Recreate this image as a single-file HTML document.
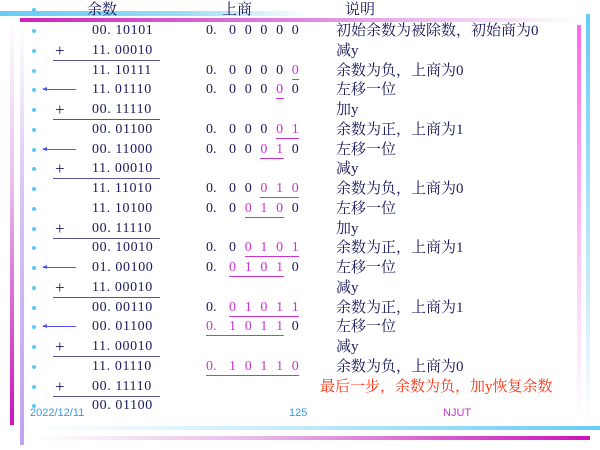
<!DOCTYPE html>
<html><head><meta charset="utf-8"><style>
body{margin:0;width:600px;height:450px;position:relative;overflow:hidden;background:#fff;font-family:"Liberation Serif","Noto Serif CJK SC",serif;font-size:14px;color:#1a1a5a}
.a{position:absolute}
.r{position:absolute;left:0;width:600px;height:20px;line-height:20px}
.b{position:absolute;left:32px;top:8px;width:4px;height:4px;border-radius:50%;background:#5bc8f5}
.n{position:absolute;left:92px;letter-spacing:0.6px}
.p{position:absolute;left:55px;font-size:17px}
.u{position:absolute;left:53px;width:107px;top:19px;height:1px;background:#555590}
.ar{position:absolute;left:43px;top:9px;width:33px;height:1px;background:#5555ee}
.ar:before{content:"";position:absolute;left:-1px;top:-2px;border-right:5px solid #5555ee;border-top:2.5px solid transparent;border-bottom:2.5px solid transparent}
.q{position:absolute;left:206px;white-space:nowrap}
.q span{display:inline-block;width:15.7px}
.q span.z{width:23px}
.q span.m{color:#cc33cc;border-bottom:1px solid #cc33cc;line-height:17px}
.q span.e{color:#cc33cc;border-bottom:1px solid #cc33cc;line-height:17px;width:7.5px;margin-right:8.2px}
.t{position:absolute;left:336px;font-size:15px;font-family:"Liberation Serif","Noto Serif CJK SC",serif}
</style></head><body>
<div class="a" style="left:0;top:11px;width:310px;height:5px;background:linear-gradient(90deg,#66ccf5,#9bdcf8 60%,#fff)"></div>
<div class="a" style="left:20px;top:18px;width:560px;height:4px;background:linear-gradient(90deg,#cc22bb,#dd88dd 50%,#fff)"></div>
<div class="a" style="left:10px;top:20px;width:4px;height:405px;background:linear-gradient(180deg,#fff,#e8c0ec 40%,#cc11bb)"></div>
<div class="a" style="left:20px;top:25px;width:4px;height:420px;background:linear-gradient(180deg,#fff,#d8c4f4 40%,#c4a0f4)"></div>
<div class="a" style="left:577px;top:25px;width:4px;height:395px;background:linear-gradient(180deg,#ff66ee,#ffd8f8 70%,#fff)"></div>
<div class="a" style="left:586px;top:14px;width:4px;height:410px;background:linear-gradient(180deg,#66ccf5,#cdeefb 70%,#fff)"></div>
<div class="a" style="left:30px;top:426px;width:570px;height:4px;background:linear-gradient(90deg,#fff,#cdeefb 40%,#66ccf5)"></div>
<div class="a" style="left:35px;top:436px;width:555px;height:4px;background:linear-gradient(90deg,#fff,#e8b8e8 40%,#cc11bb)"></div>

<div class="r" style="top:0;font-size:15px"><div class="b"></div><span class="a" style="left:87px">余数</span><span class="a" style="left:222px">上商</span><span class="a" style="left:345px">说明</span></div>

<div class="r" style="top:21px"><div class="b"></div><span class="n">00. 10101</span><div class="q"><span class="z">0.</span><span>0</span><span>0</span><span>0</span><span>0</span><span>0</span></div><span class="t">初始余数为被除数，初始商为0</span></div>
<div class="r" style="top:41px"><div class="b"></div><span class="p">+</span><span class="n">11. 00010</span><div class="u"></div><span class="t">减y</span></div>
<div class="r" style="top:61px"><div class="b"></div><span class="n">11. 10111</span><div class="q"><span class="z">0.</span><span>0</span><span>0</span><span>0</span><span>0</span><span class="e">0</span></div><span class="t">余数为负，上商为0</span></div>
<div class="r" style="top:80px"><div class="b"></div><div class="ar"></div><span class="n">11. 01110</span><div class="q"><span class="z">0.</span><span>0</span><span>0</span><span>0</span><span class="e">0</span><span>0</span></div><span class="t">左移一位</span></div>
<div class="r" style="top:100px"><div class="b"></div><span class="p">+</span><span class="n">00. 11110</span><div class="u"></div><span class="t">加y</span></div>
<div class="r" style="top:120px"><div class="b"></div><span class="n">00. 01100</span><div class="q"><span class="z">0.</span><span>0</span><span>0</span><span>0</span><span class="m">0</span><span class="e">1</span></div><span class="t">余数为正，上商为1</span></div>
<div class="r" style="top:140px"><div class="b"></div><div class="ar"></div><span class="n">00. 11000</span><div class="q"><span class="z">0.</span><span>0</span><span>0</span><span class="m">0</span><span class="e">1</span><span>0</span></div><span class="t">左移一位</span></div>
<div class="r" style="top:159px"><div class="b"></div><span class="p">+</span><span class="n">11. 00010</span><div class="u"></div><span class="t">减y</span></div>
<div class="r" style="top:179px"><div class="b"></div><span class="n">11. 11010</span><div class="q"><span class="z">0.</span><span>0</span><span>0</span><span class="m">0</span><span class="m">1</span><span class="e">0</span></div><span class="t">余数为负，上商为0</span></div>
<div class="r" style="top:199px"><div class="b"></div><span class="n">11. 10100</span><div class="q"><span class="z">0.</span><span>0</span><span class="m">0</span><span class="m">1</span><span class="e">0</span><span>0</span></div><span class="t">左移一位</span></div>
<div class="r" style="top:219px"><div class="b"></div><span class="p">+</span><span class="n">00. 11110</span><div class="u"></div><span class="t">加y</span></div>
<div class="r" style="top:238px"><div class="b"></div><span class="n">00. 10010</span><div class="q"><span class="z">0.</span><span>0</span><span class="m">0</span><span class="m">1</span><span class="m">0</span><span class="e">1</span></div><span class="t">余数为正，上商为1</span></div>
<div class="r" style="top:258px"><div class="b"></div><div class="ar"></div><span class="n">01. 00100</span><div class="q"><span class="z">0.</span><span class="m">0</span><span class="m">1</span><span class="m">0</span><span class="e">1</span><span>0</span></div><span class="t">左移一位</span></div>
<div class="r" style="top:278px"><div class="b"></div><span class="p">+</span><span class="n">11. 00010</span><div class="u"></div><span class="t">减y</span></div>
<div class="r" style="top:298px"><div class="b"></div><span class="n">00. 00110</span><div class="q"><span class="z">0.</span><span class="m">0</span><span class="m">1</span><span class="m">0</span><span class="m">1</span><span class="e">1</span></div><span class="t">余数为正，上商为1</span></div>
<div class="r" style="top:317px"><div class="b"></div><div class="ar"></div><span class="n">00. 01100</span><div class="q"><span class="z m">0.</span><span class="m">1</span><span class="m">0</span><span class="m">1</span><span class="e">1</span><span>0</span></div><span class="t">左移一位</span></div>
<div class="r" style="top:337px"><div class="b"></div><span class="p">+</span><span class="n">11. 00010</span><div class="u"></div><span class="t">减y</span></div>
<div class="r" style="top:357px"><div class="b"></div><span class="n">11. 01110</span><div class="q"><span class="z m">0.</span><span class="m">1</span><span class="m">0</span><span class="m">1</span><span class="m">1</span><span class="e">0</span></div><span class="t">余数为负，上商为0</span></div>
<div class="r" style="top:377px"><div class="b"></div><span class="p">+</span><span class="n">00. 11110</span><div class="u"></div><span class="t" style="left:320px;color:#ff3311">最后一步，余数为负，加y恢复余数</span></div>
<div class="r" style="top:396px"><div class="b"></div><span class="n">00. 01100</span></div>

<div class="a" style="left:30px;top:407px;font-family:'Liberation Sans',sans-serif;font-size:11px;color:#3399ee">2022/12/11</div>
<div class="a" style="left:289px;top:407px;font-family:'Liberation Sans',sans-serif;font-size:11px;color:#3399ee">125</div>
<div class="a" style="left:443px;top:407px;font-family:'Liberation Sans',sans-serif;font-size:11px;color:#cc33cc">NJUT</div>
</body></html>
